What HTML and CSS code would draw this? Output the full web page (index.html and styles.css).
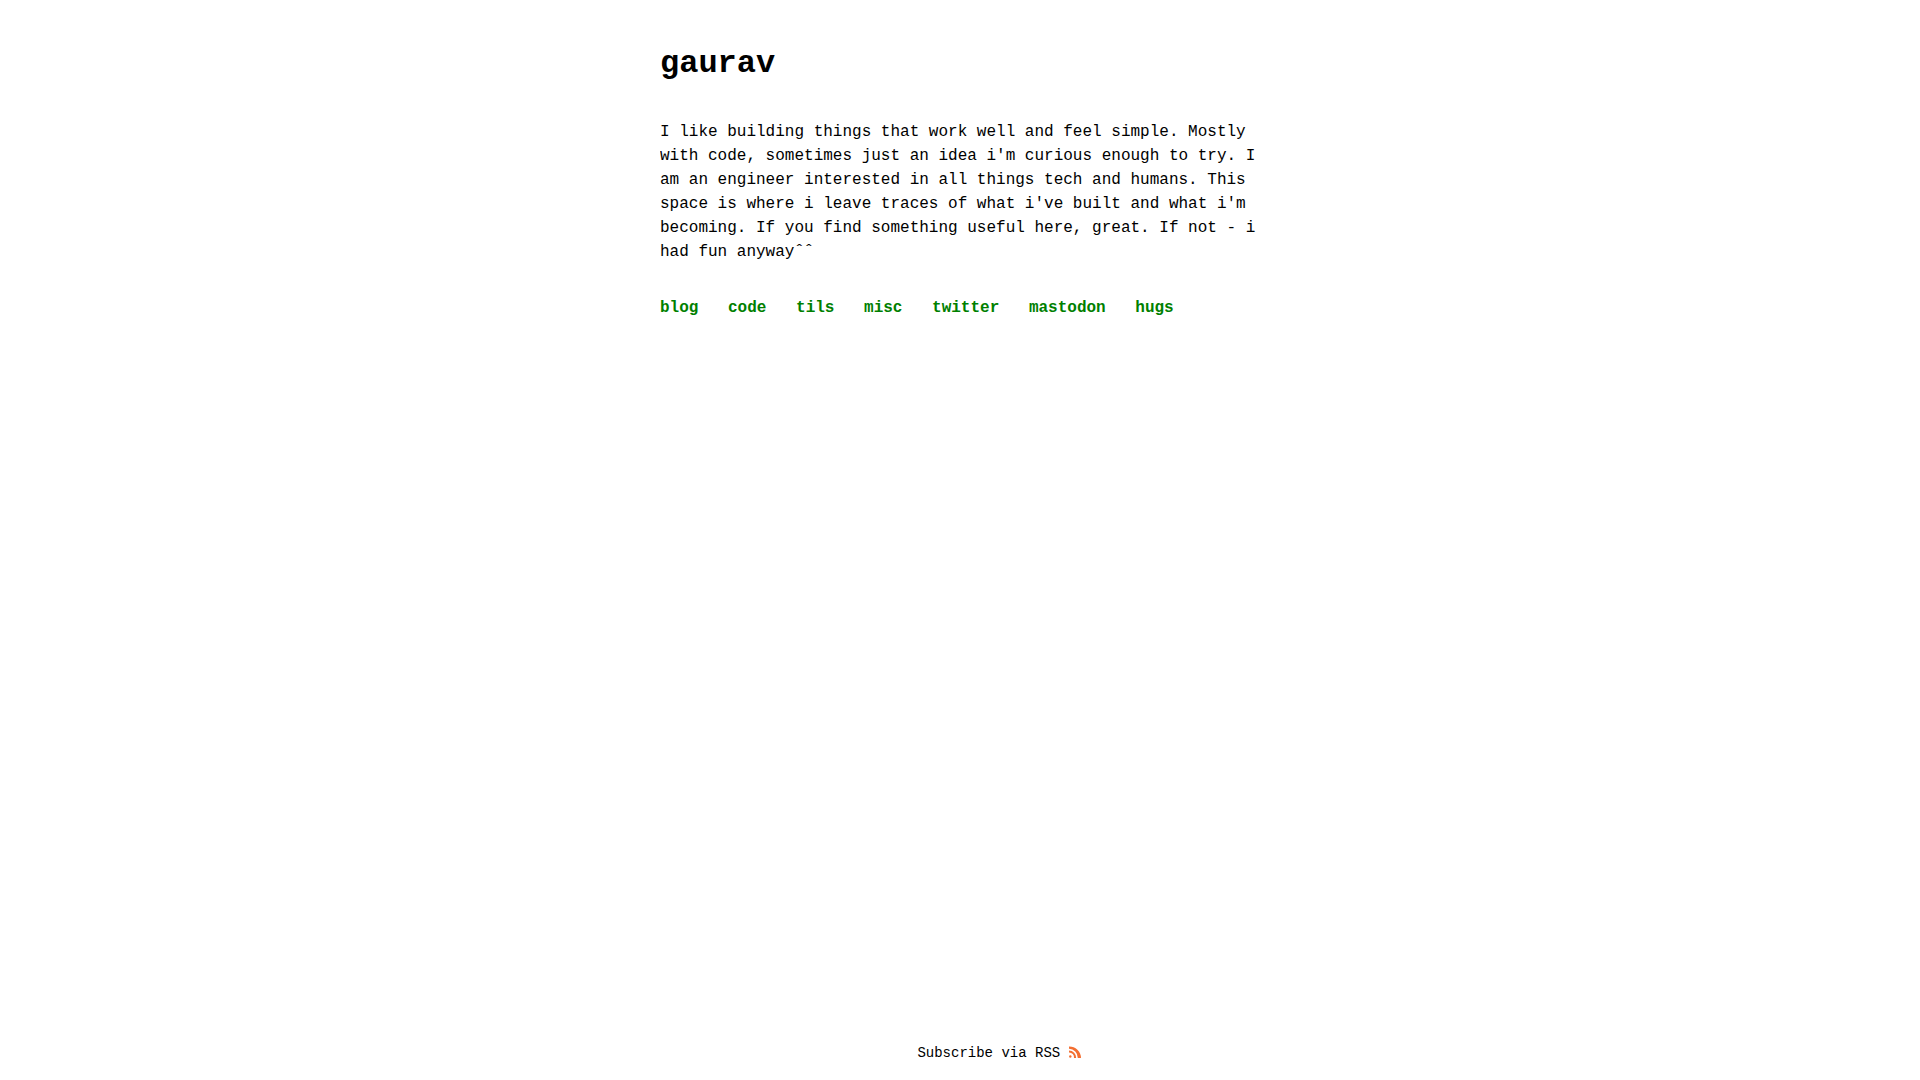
FILE: index.html
```html
<!DOCTYPE html>
<html lang="en">
  <head>
    <meta charset="UTF-8" />
    <meta name="viewport" content="width=device-width, initial-scale=1.0" />
    <title>gaurav</title>
    <link rel="stylesheet" href="styles.css">
  </head>
  <body>
    <main>
      <h1>gaurav</h1>
      <p>
        I like building things that work well and feel simple. Mostly with code,
        sometimes just an idea i'm curious enough to try. I am an engineer
        interested in all things tech and humans. This space is where i leave
        traces of what i've built and what i'm becoming. If you find something
        useful here, great. If not - i had fun anywayˆˆ
      </p>
      <nav>
        <a href="#blog">blog</a>
        <a href="#code">code</a>
        <a href="#tils">tils</a>
        <a href="#misc">misc</a>
        <a href="#twitter">twitter</a>
        <a href="#mastodon">mastodon</a>
        <a href="#hugs">hugs</a>
      </nav>
    </main>

    <footer>
      <a href="#rss">
        Subscribe via RSS
        <svg class="rss" viewBox="0 0 12 12" aria-hidden="true">
          <circle cx="1.3" cy="10.5" r="1.2" />
          <path d="M0 4.4v2A5 5 0 0 1 5 12h2.2A7.4 7.4 0 0 0 0 4.4z" />
          <path d="M0 .4v2.4A9 9 0 0 1 8.8 12H12A11.8 11.8 0 0 0 0 .4z" />
        </svg>
      </a>
    </footer>
  </body>
</html>
```

FILE: styles.css
```css
* {
  box-sizing: border-box;
}

body {
  font-family: "Liberation Mono", monospace;
  font-size: 16px;
  line-height: 24px;
  color: black;
  background-color: white;
  display: flex;
  flex-direction: column;
  width: 100%;
  max-width: 600px;
  min-height: 100vh;
  margin: 0 auto;
  padding: 40px 0 15px;
}

main {
  flex: 1;
}

h1 {
  font-size: 32px;
  line-height: 48px;
  margin: 0;
}

p {
  margin: 32px 0;
}

nav a {
  color: green;
  font-weight: bold;
  text-decoration: none;
  margin-right: 20px;
}

footer {
  font-size: 14px;
  text-align: center;
  padding-left: 78px;
}

footer a {
  color: black;
  text-decoration: none;
}

.rss {
  width: 12px;
  height: 12px;
  fill: #f36f32;
  vertical-align: -1px;
}
```
